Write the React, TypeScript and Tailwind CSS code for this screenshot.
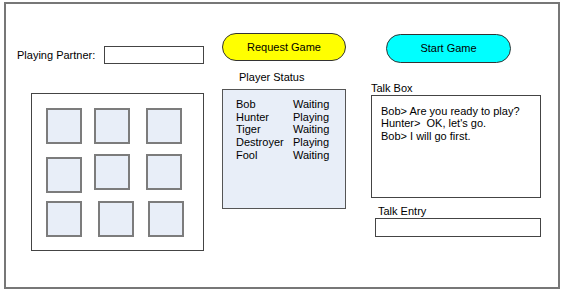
import React from "react";

const players = [
  { name: "Bob", status: "Waiting" },
  { name: "Hunter", status: "Playing" },
  { name: "Tiger", status: "Waiting" },
  { name: "Destroyer", status: "Playing" },
  { name: "Fool", status: "Waiting" },
];

function Tile({ className = "" }: { className?: string }) {
  return <div className={`w-[36px] h-[36px] bg-[#e8eef8] border-2 border-[#7c7c7c] ${className}`} />;
}

export default function App() {
  return (
    <div className="w-[565px] h-[290px] bg-white pt-[2px] pl-[4px] font-['Liberation_Sans',Arial,sans-serif] text-[11px] leading-[13px] text-black">
      <div className="w-[556px] h-[287px] border-2 border-[#777] flex items-start">
        {/* Left: partner + board */}
        <div className="ml-[11px] mt-[42px] flex flex-col">
          <div className="flex items-center h-[18px]">
            <span className="w-[87px]">Playing Partner:</span>
            <input className="w-[100px] h-[18px] border border-[#444] bg-white outline-none" />
          </div>
          <div className="ml-[14px] mt-[29px] w-[173px] h-[158px] border border-[#444] bg-white pl-[14px] pt-[14px]">
            <div className="flex items-start">
              <Tile />
              <Tile className="ml-[12px]" />
              <Tile className="ml-[16px]" />
            </div>
            <div className="flex items-start mt-[10px]">
              <Tile className="mt-[3px]" />
              <Tile className="ml-[12px]" />
              <Tile className="ml-[16px]" />
            </div>
            <div className="flex items-start mt-[8px]">
              <Tile />
              <Tile className="ml-[16px]" />
              <Tile className="ml-[14px]" />
            </div>
          </div>
        </div>

        {/* Middle: request + status */}
        <div className="ml-[18px] mt-[29px] flex flex-col">
          <button className="w-[124px] h-[28px] rounded-full bg-[#ffff00] border border-[#333] text-black">
            Request Game
          </button>
          <div className="mt-[10px] ml-[17px]">Player Status</div>
          <div className="mt-[5px] w-[124px] h-[120px] bg-[#e8eef8] border border-[#555] pl-[13px] pt-[8px] leading-[12.7px]">
            {players.map((p) => (
              <div key={p.name} className="flex">
                <span className="w-[57px]">{p.name}</span>
                <span>{p.status}</span>
              </div>
            ))}
          </div>
        </div>

        {/* Right: start + talk */}
        <div className="ml-[25px] mt-[30px] flex flex-col">
          <button className="ml-[15px] w-[125px] h-[29px] rounded-full bg-[#00ffff] border border-[#333] text-black">
            Start Game
          </button>
          <div className="mt-[19px]">Talk Box</div>
          <div className="w-[170px] h-[103px] border border-[#444] bg-white pl-[9px] pt-[9px] leading-[12.3px] whitespace-pre">
            <div>Bob&gt; Are you ready to play?</div>
            <div>Hunter&gt;  OK, let's go.</div>
            <div>Bob&gt; I will go first.</div>
          </div>
          <div className="mt-[7px] ml-[7px]">Talk Entry</div>
          <input className="ml-[4px] w-[166px] h-[19px] border border-[#444] bg-white outline-none" />
        </div>
      </div>
    </div>
  );
}
